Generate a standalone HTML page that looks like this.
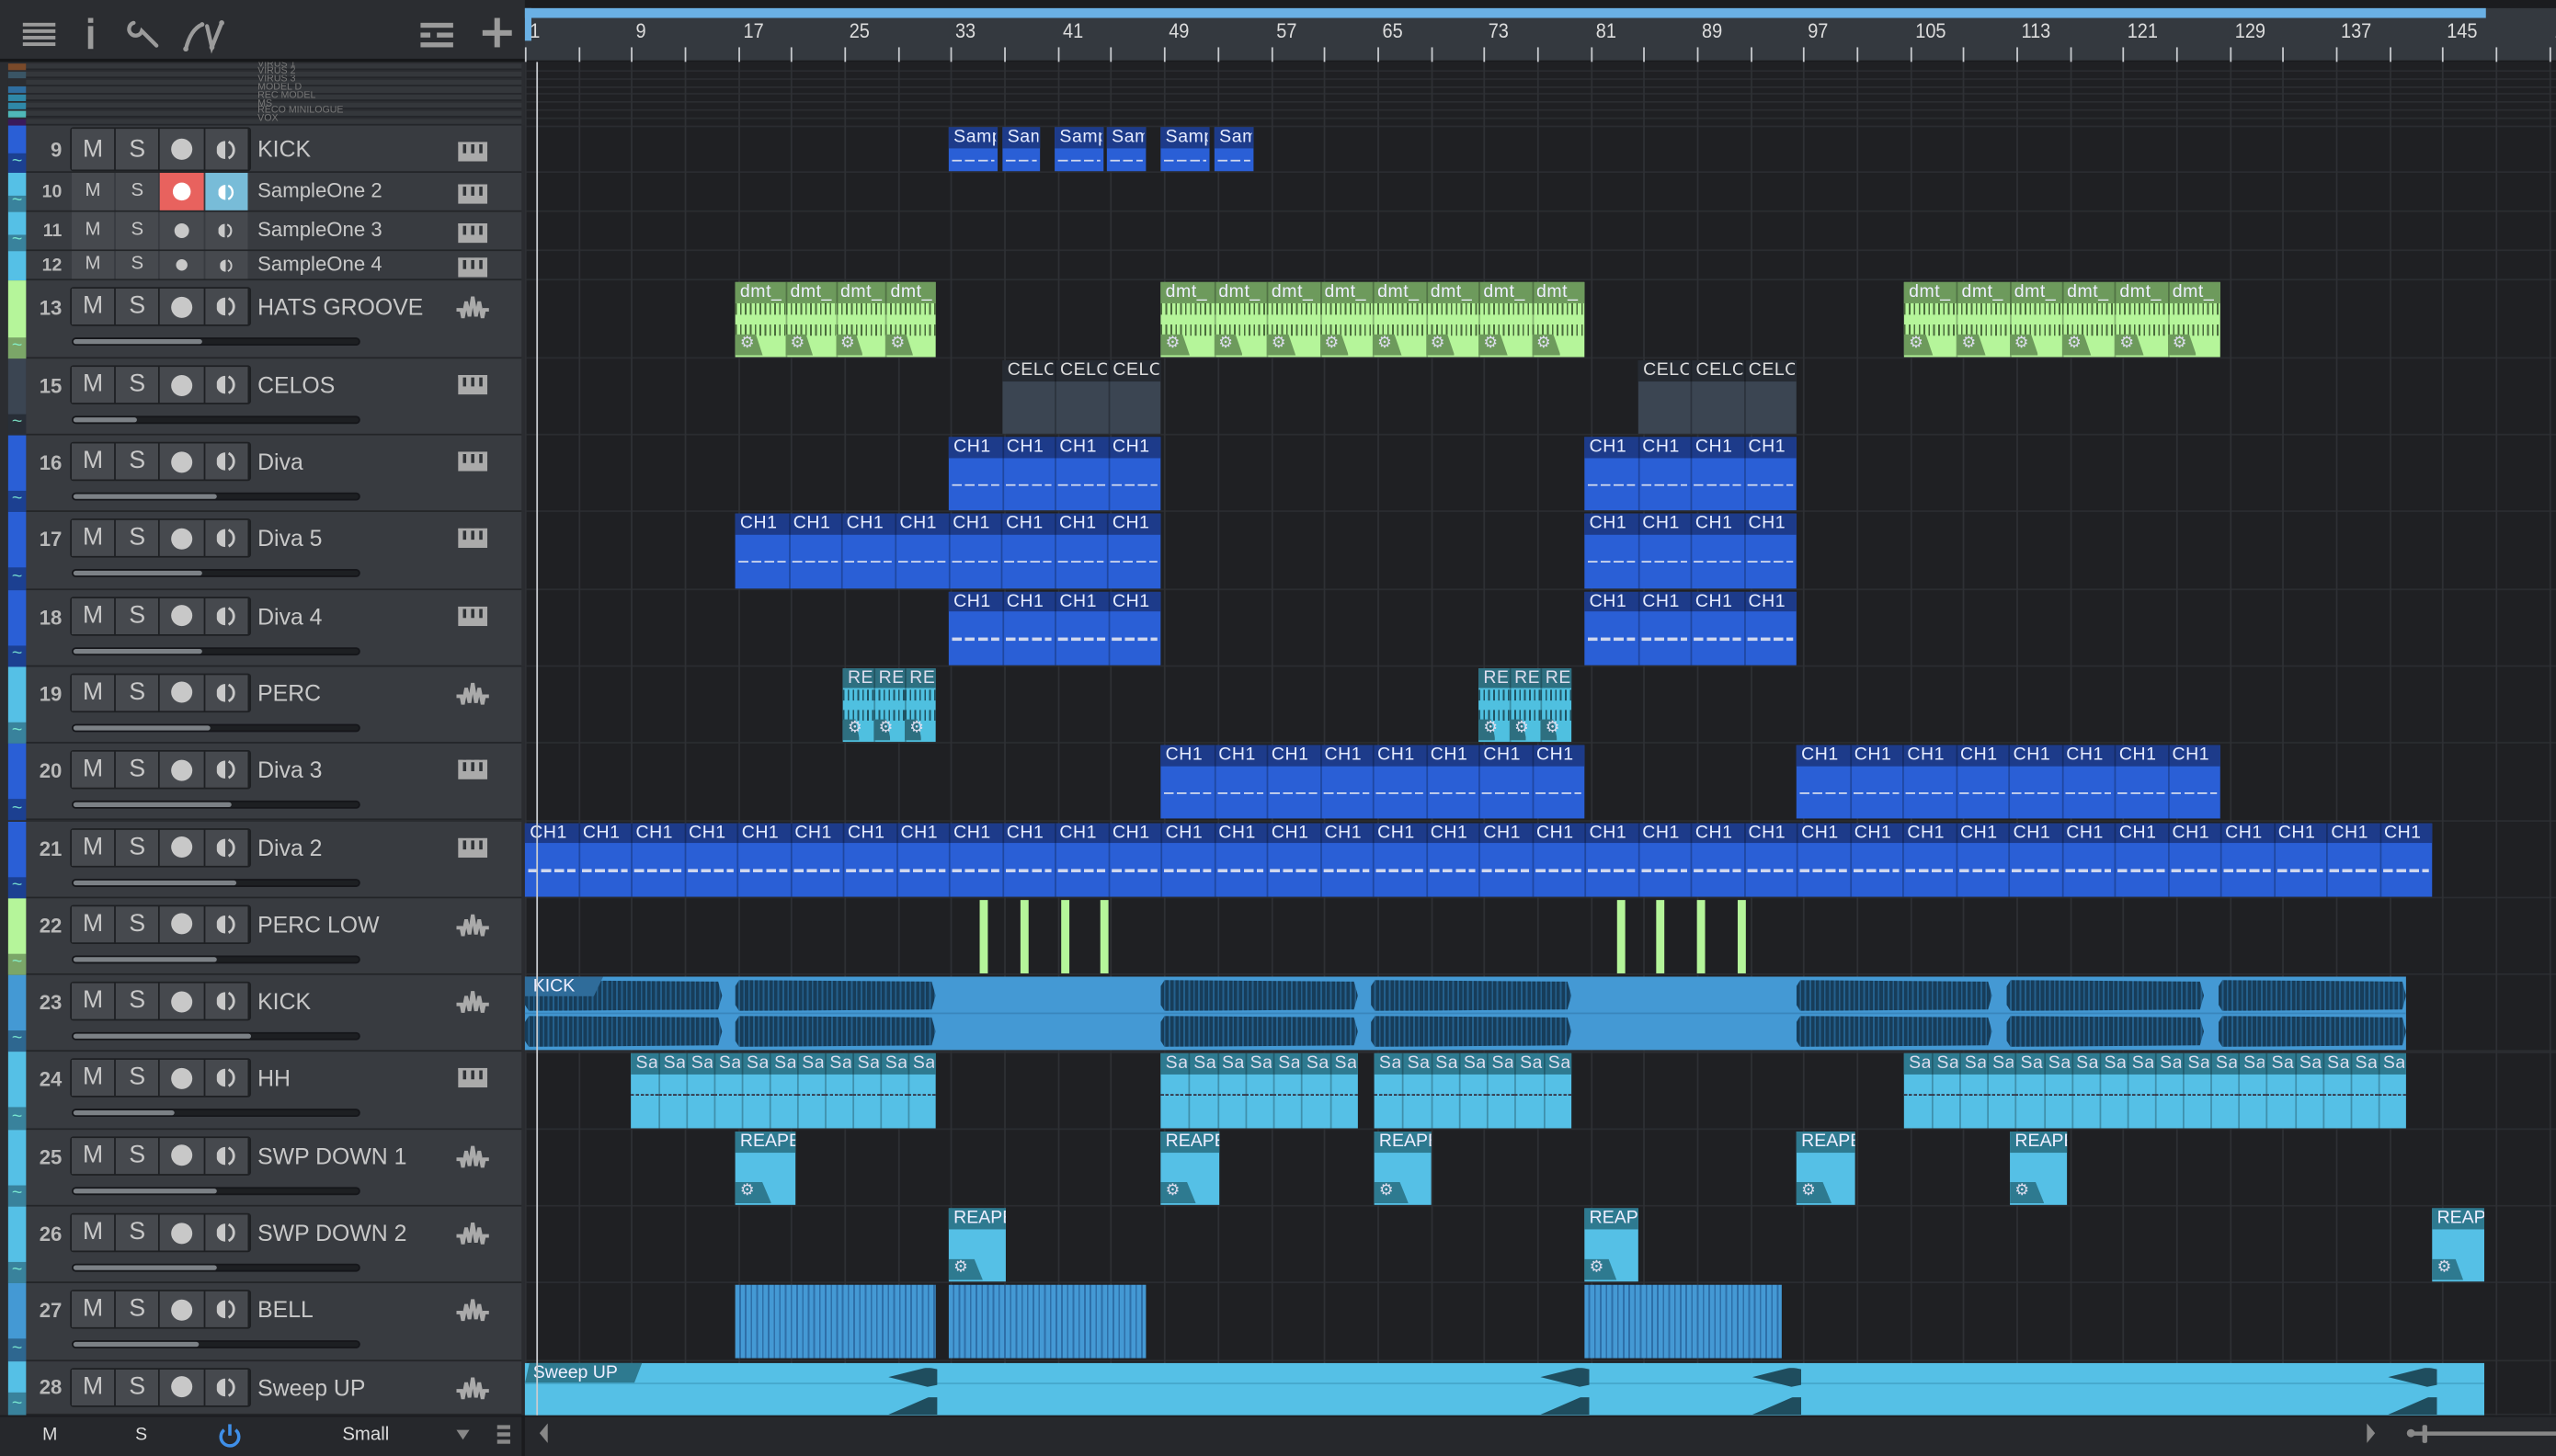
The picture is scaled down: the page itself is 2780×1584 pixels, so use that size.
<!DOCTYPE html>
<html><head><meta charset="utf-8">
<style>
html,body{margin:0;padding:0;background:#1b1c1f;width:2780px;height:1584px;overflow:hidden}
#app{position:absolute;left:0;top:0;width:1568px;height:893px;transform:scale(1.77296,1.77380);transform-origin:0 0;background:#1f2023;font-family:"Liberation Sans",sans-serif;overflow:hidden}
.a{position:absolute;box-sizing:border-box}
.t{position:absolute;white-space:nowrap;overflow:hidden;font-family:"Liberation Sans",sans-serif}
</style></head><body><div id="app"></div>
<script>
const A=document.getElementById('app');let H='';
function box(x,y,w,h,st){H+=`<div class="a" style="left:${x}px;top:${y}px;width:${w}px;height:${h}px;${st||''}"></div>`;}
function txt(x,y,s,st){H+=`<div class="t" style="left:${x}px;top:${y}px;${st||''}">${s}</div>`;}
const TL=322;
box(TL,38,1568-TL,830,'background:#1f2023');
const tr=[
[9,77,29,'KICK','#2a5fd6','p',0],[10,106,24,'SampleOne 2','#55c0e6','p',0],[11,130,24,'SampleOne 3','#55c0e6','p',0],[12,154,18,'SampleOne 4','#55c0e6','p',0],
[13,172,48,'HATS GROOVE','#b5f59a','w',.45],[15,220,47,'CELOS','#3b4552','p',.22]];
const rest=[[16,'Diva','#2a5fd6','p',.5],[17,'Diva 5','#2a5fd6','p',.45],[18,'Diva 4','#2a5fd6','p',.45],[19,'PERC','#55c0e6','w',.48],[20,'Diva 3','#2a5fd6','p',.55],[21,'Diva 2','#2a5fd6','p',.57],[22,'PERC LOW','#b5f59a','w',.5],[23,'KICK','#4499d4','w',.62],[24,'HH','#55c0e6','p',.35],[25,'SWP DOWN 1','#55c0e6','w',.5],[26,'SWP DOWN 2','#55c0e6','w',.5],[27,'BELL','#4499d4','w',.44],[28,'Sweep UP','#55c0e6','w',0]];
let y=267;rest.forEach((r,i)=>{let h=(r[0]==28)?33:47.3;tr.push([r[0],y,h,r[1],r[2],r[3],r[4]]);y+=h;});
box(0,0,322,893,'background:#2b2d31');
const cc=['#7a4a2a','#3a5565','#2b2d31','#2f6ea0','#2f88a8','#2f88a8','#4fb8b8','#3a1a5a'];
const cn=['VIRUS 1','VIRUS 2','VIRUS 3','MODEL D','REC MODEL','MS','RECO MINILOGUE','VOX'];
for(let i=0;i<8;i++){let yy=39+i*4.8;box(5,yy,11,4,'background:'+cc[i]);box(16,yy,304,4.2,'background:#34373b;border-bottom:1px solid #24262a');txt(158,yy-2.5,cn[i],'font-size:6px;color:#777;line-height:7px;height:5px');
box(TL,yy+4,1568-TL,0.8,'background:#2a2c30');}
const pianoSVG='<svg width="18" height="12" viewBox="0 0 18 12"><rect x="0" y="0" width="18" height="12" fill="#aaa"/><rect x="3" y="0" width="2" height="7" fill="#2f3236"/><rect x="8" y="0" width="2" height="7" fill="#2f3236"/><rect x="13" y="0" width="2" height="7" fill="#2f3236"/><rect x="0" y="0" width="18" height="1.5" fill="#aaa"/></svg>';
const waveSVG='<svg width="20" height="16" viewBox="0 0 20 16"><path d="M0 9 L3 9 L4 14 L6 4 L8 13 L10 1 L12 13 L14 4 L16 14 L17 9 L20 9" fill="none" stroke="#aaa" stroke-width="2.2"/></svg>';
tr.forEach(r=>{const[n,t,h,name,col,ic,fad]=r;const big=h>40;
 box(16,t,304,h,'background:#383b40;border-bottom:1.5px solid #232528');
 box(5,t,11,h,'background:'+col);
 if(h>20){box(5,t+h*(big?0.72:0.58),11,h*(big?0.28:0.42),'background:rgba(0,0,0,.32)');txt(5,t+h-(big?13:12),'~','font-size:11px;color:#8fd;line-height:10px;width:11px;text-align:center;opacity:.8');}
 box(320,t,2,h,'background:#2a2c30');
 box(TL,t+h-1,1568-TL,1.2,'background:#2a2c30');
 let by,bh,fs;
 if(n==9){by=t+2;bh=25;fs=15}else if(n>=10&&n<=12){by=t;bh=h-1;fs=12}else{by=t+5;bh=22;fs=15}
 const small=(n>=10&&n<=12);
 txt(16,t+(big?9:(h/2-8)),String(n),`width:22px;text-align:right;font-size:${small?11:12.5}px;font-weight:bold;color:#b9b9b9;line-height:16px`);
 if(!small)box(43,by-1,111,bh+2,'background:#1e2023;border-radius:2px');
 for(let k=0;k<4;k++){let bx=44+k*27.2;let bg='#46494e';
  if(n==10&&k==2)bg='#e8625e';if(n==10&&k==3)bg='#78bcd8';
  box(bx,by,26.2,bh,'background:'+bg);
  let c=(n==10&&k>=2)?'#fff':'#c8c8c8';
  if(k<2){let f=small?11.5:fs;txt(bx,by,k?'S':'M',`width:26px;text-align:center;line-height:${bh}px;font-size:${f}px;color:${c}`);}
  else if(k==2){let r=small?(n==12?3.5:4.5):6.5;if(n==10)r=5.5;box(bx+13.1-r,by+bh/2-r,2*r,2*r,'border-radius:50%;background:'+c);}
  else{let s=small?(n==12?8:9):12;if(n==10)s=10;H+=`<svg class="a" style="left:${bx+13.1-s/2}px;top:${by+bh/2-s/2}px" width="${s}" height="${s}" viewBox="0 0 12 12"><path d="M5.2 0.5 A5.5 5.5 0 0 0 5.2 11.5Z" fill="${c}"/><path d="M7.2 1 A5.5 5.5 0 0 1 7.2 11" fill="none" stroke="${c}" stroke-width="1.6"/></svg>`;}
 }
 txt(158,(big||n==28?t+5:by),name,`font-size:${small?12.5:14}px;color:#c8c8c8;line-height:${big||n==28?22:bh}px`);
 H+=`<div class="a" style="left:${ic=='p'?281:280}px;top:${(big||n==28)?t+9:by+bh/2-6}px">${ic=='p'?pianoSVG:waveSVG}</div>`;
 if(fad>0){box(44,t+35,177,5,'background:#1d1f22;border-radius:3px;border:1px solid #15161a');box(45,t+36,176*fad,3,'background:#7c8186;border-radius:2px');}
});
box(0,0,322,38,'background:#2b2d31;border-bottom:2px solid #161719');
H+=`<svg class="a" style="left:0;top:0" width="322" height="38"><g fill="#9b9b9b">
<rect x="14" y="14" width="20" height="2.2"/><rect x="14" y="18" width="20" height="2.2"/><rect x="14" y="22" width="20" height="2.2"/><rect x="14" y="26" width="20" height="2.2"/>
<rect x="54" y="16" width="3.2" height="14"/><rect x="54" y="11" width="3.2" height="3"/>
<rect x="258" y="14" width="20" height="3"/><rect x="258" y="20" width="6" height="3"/><rect x="268" y="20" width="10" height="3"/><rect x="258" y="26" width="20" height="3"/>
<rect x="296" y="18.5" width="18" height="3.4"/><rect x="303.3" y="11" width="3.4" height="18"/></g>
<g stroke="#9b9b9b" fill="none" stroke-width="2.4" stroke-linecap="round"><path d="M82 14 a4 4 0 1 0 5 5 L96 28"/><path d="M114 30 Q117 18 124 15 M127 16 L130 29 L136 14"/></g>
<g fill="#9b9b9b"><circle cx="114" cy="30" r="1.6"/><circle cx="130" cy="29" r="1.6"/><circle cx="136" cy="14" r="1.6"/><circle cx="124" cy="15" r="1.4"/></g></svg>`;
box(0,868,1568,25,'background:#26282c;border-top:1px solid #1b1c1f');
box(320,868,2,25,'background:#1a1b1e');
txt(26,872,'M','font-size:11px;color:#ddd;line-height:16px');txt(83,872,'S','font-size:11px;color:#ddd;line-height:16px');
H+=`<svg class="a" style="top:872px;left:133px" width="16" height="16"><path d="M4.5 5 A5.5 5.5 0 1 0 11.5 5" fill="none" stroke="#3f8fe8" stroke-width="2"/><rect x="7" y="1.5" width="2" height="7" fill="#3f8fe8"/></svg>`;
txt(210,872,'Small','font-size:11.5px;color:#ddd;line-height:16px');
H+=`<svg class="a" style="left:280px;top:874px" width="40" height="14"><path d="M0 3 L8 3 L4 9Z" fill="#888"/><rect x="25" y="0" width="8" height="2.5" fill="#888"/><rect x="25" y="4.5" width="8" height="2.5" fill="#888"/><rect x="25" y="9" width="8" height="2.5" fill="#888"/></svg>`;
H+=`<svg class="a" style="left:328px;top:872px" width="12" height="14"><path d="M8 1 L3 7 L8 13Z" fill="#888"/></svg>`;
H+=`<svg class="a" style="left:1450px;top:872px" width="118" height="14"><path d="M2 1 L7 7 L2 13Z" fill="#888"/><circle cx="29" cy="7" r="2.5" fill="#888"/><rect x="29" y="6" width="90" height="2.5" fill="#888"/><rect x="36" y="2" width="3" height="11" rx="1" fill="#888"/></svg>`;
box(TL,0,1568-TL,38,'background:#34393f;border-bottom:1px solid #1a1b1e');
box(TL,0,1568-TL,5,'background:#1b1c1f');
box(TL,5,1525-TL,6,'background:#6ab0e4');
box(TL,5,4,20,'background:#6ab0e4');
const bx=b=>TL+(b-1)*8.17;
for(let b=1;b<=153;b+=4){let x=bx(b);box(x,29,1,9,'background:#c9ccd0');box(x,38,1,830,'background:#2e3034');if((b-1)%8==0){txt(x+3,11,String(b),'font-size:12.5px;color:#ddd;line-height:16px;transform:scaleX(.9);transform-origin:0 0');}}
function segClip(x1,x2,t,h,n,hb,bb,hc,lab,kind){
 const w=x2-x1,sw=w/n;box(x1,t+1,w,h-2,'background:'+bb);box(x1,t+1,w,12.5,'background:'+hb);
 for(let i=0;i<n;i++){let sx=x1+i*sw;if(i>0)box(sx,t+1,1,h-2,'background:rgba(0,0,0,.25)');
  txt(sx+3,t+1,lab,`width:${sw-4}px;font-size:11px;color:${hc};line-height:13px;letter-spacing:.3px`);
  if(kind=='midi'){box(sx+2,t+1+(h-14)/2+12,sw-4,1.5,'background:repeating-linear-gradient(90deg,#d0d8ee 0 6px,transparent 6px 8px)');}
  if(kind=='sa'){box(sx,t+26,sw,1,'background:repeating-linear-gradient(90deg,#334 0 2px,transparent 2px 3px)');}
  if(kind=='gr'||kind=='te'){const gc=kind=='gr'?'#6d9a5c':'#2e6f80',wc=kind=='gr'?'#4a6b3c':'#1f5363';
   box(sx,t+14,sw,h-28,`background:repeating-linear-gradient(90deg,${wc} 0 1px,transparent 1px 3px);clip-path:polygon(0 0,100% 0,100% 35%,0 35%,0 65%,100% 65%,100% 100%,0 100%)`);
   box(sx,t+h-15,sw*0.55,13,'background:'+gc+';clip-path:polygon(0 0,75% 0,100% 100%,0 100%)');txt(sx+3,t+h-16,'⚙','font-size:10px;color:#dde;line-height:14px');}
 }}
const T={};tr.forEach(r=>T[r[0]]=[r[1],r[2]]);
[[582,612],[615,638],[647,677],[679,703],[712,742],[745,769]].forEach(c=>segClip(c[0],c[1],T[9][0],T[9][1],1,'#1d3b8a','#2a5fd6','#e6ecff','Sample','midi'));
[[451,574,4],[712,972,8],[1168,1362,6]].forEach(c=>segClip(c[0],c[1],T[13][0],T[13][1],c[2],'#6d9a5c','#b5f59a','#eef','dmt_','gr'));
[[615,712],[1005,1102]].forEach(c=>segClip(c[0],c[1],T[15][0],T[15][1],3,'#262b33','#3b4552','#ddd','CELOS',''));
const mid=(id,list)=>list.forEach(c=>segClip(c[0],c[1],T[id][0],T[id][1],c[2],'#1d3b8a','#2a5fd6','#e6ecff','CH1','midi'));
mid(16,[[582,712,4],[972,1102,4]]);mid(17,[[451,712,8],[972,1102,4]]);mid(18,[[582,712,4],[972,1102,4]]);
mid(20,[[712,972,8],[1102,1362,8]]);mid(21,[[322,1492,36]]);
[[517,574],[907,964]].forEach(c=>segClip(c[0],c[1],T[19][0],T[19][1],3,'#2e6f80','#4fc0e0','#dde','REAPER','te'));
[601,626,651,675,992,1016,1041,1066].forEach(x=>box(x,T[22][0]+1,4.5,45,'background:#b5f59a'));
{const t=T[23][0];box(322,t+1,1154,45,'background:#4499d4');
[[322,443],[451,574],[712,833],[841,964],[1102,1222],[1231,1352],[1361,1476]].forEach(c=>{const w=c[1]-c[0];box(c[0],t+3,w,19,'background:repeating-linear-gradient(90deg,#173d5a 0 2px,#24608c 2px 3px);clip-path:polygon(0 20%,2% 0,98% 5%,100% 50%,98% 95%,2% 100%,0 80%)');box(c[0],t+25,w,19,'background:repeating-linear-gradient(90deg,#173d5a 0 2px,#24608c 2px 3px);clip-path:polygon(0 20%,2% 0,98% 5%,100% 50%,98% 95%,2% 100%,0 80%)');});
box(322,t+23,1154,1,'background:#3a86bd');
box(322,t+1,48,12,'background:#2f6c9a;clip-path:polygon(0 0,100% 0,88% 100%,0 100%)');txt(327,t+0.5,'KICK','font-size:11px;color:#eef;line-height:13px');}
[[387,574,11],[712,833,7],[843,964,7],[1168,1476,18]].forEach(c=>segClip(c[0],c[1],T[24][0],T[24][1],c[2],'#2e7a90','#55c0e6','#dde','Sample','sa'));
function rea(x1,x2,id){const[t,h]=T[id];box(x1,t+1,x2-x1,h-2,'background:#55c0e6');box(x1,t+1,x2-x1,13,'background:#2e7a90');txt(x1+3,t+1,'REAPER',`width:${x2-x1-3}px;font-size:11px;color:#eef;line-height:13px`);box(x1,t+h-15,(x2-x1)*0.6,13,'background:#2e7a90;clip-path:polygon(0 0,75% 0,100% 100%,0 100%)');txt(x1+3,t+h-16,'⚙','font-size:10px;color:#dde;line-height:14px');}
[[451,488],[712,748],[843,878],[1102,1138],[1233,1268]].forEach(c=>rea(c[0],c[1],25));
[[582,617],[972,1005],[1492,1524]].forEach(c=>rea(c[0],c[1],26));
[[451,574],[582,703],[972,1093]].forEach(c=>box(c[0],T[27][0]+1,c[1]-c[0],45,'background:repeating-linear-gradient(90deg,#4499d4 0 2.5px,#2e6fa8 2.5px 3.5px)'));
{const t=T[28][0];box(322,t+1,1202,32,'background:#55c0e6');box(322,t+1,72,13,'background:#2e7a90;clip-path:polygon(4% 0,100% 0,93% 100%,0 100%)');txt(327,t+1,'Sweep UP','font-size:11px;color:#eef;line-height:13px');box(322,t+13,1202,1,'background:#45a8cc');
[545,945,1075,1465].forEach(x=>{box(x,t+4,30,12,'background:#1f4d5e;clip-path:polygon(0 50%,80% 0,100% 10%,100% 90%,80% 100%)');box(x,t+22,30,11,'background:#1f4d5e;clip-path:polygon(0 100%,85% 0,100% 0,100% 100%)');});}
box(329,38,1.3,830,'background:#c9ccd0');
A.innerHTML=H;
</script></body></html>
